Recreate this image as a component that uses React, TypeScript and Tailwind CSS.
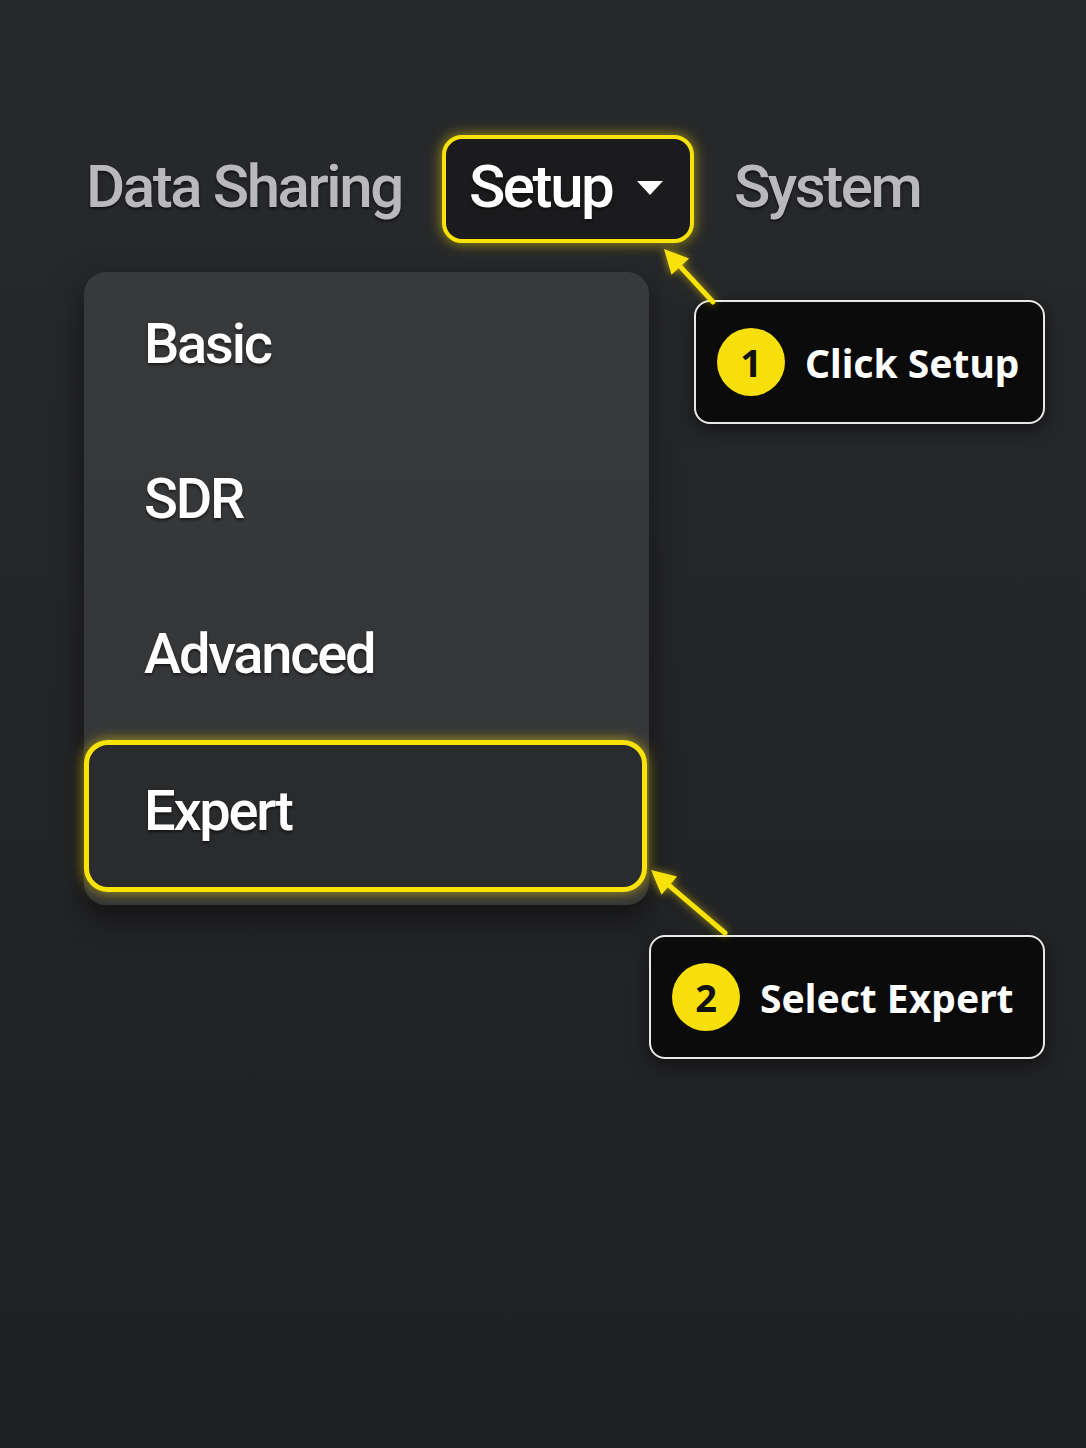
import React from "react";

const shadowText = "[text-shadow:0_2px_3px_rgba(0,0,0,0.55)]";

function Callout({ n, label, className }: { n: string; label: string; className?: string }) {
  return (
    <div
      className={`flex items-center h-[124px] rounded-[16px] border-2 border-[#e8e8e8] bg-[#0b0b0b] shadow-[0_6px_18px_rgba(0,0,0,0.5)] ${className ?? ""}`}
    >
      <div className="flex items-center justify-center w-[68px] h-[68px] rounded-full bg-[#f7df0c] text-[#111] text-[38px] font-bold leading-none [font-family:'Noto_Sans',sans-serif]">
        {n}
      </div>
      <span className="ml-[20px] text-white text-[39px] font-bold leading-none whitespace-nowrap [font-family:'Noto_Sans',sans-serif] [text-shadow:0_2px_3px_rgba(0,0,0,0.6)]">
        {label}
      </span>
    </div>
  );
}

export default function App() {
  const items = ["Basic", "SDR", "Advanced"];
  return (
    <div className="relative w-[1086px] h-[1448px] overflow-hidden bg-[linear-gradient(180deg,#28292b_0%,#242527_50%,#1f2022_100%)] [font-family:Roboto,'Liberation_Sans',sans-serif]">
      <div className="pl-[84px] pt-[135px]">
        {/* top navigation */}
        <div className="flex items-center h-[108px] tracking-[-0.04em] text-[60px] font-medium leading-none">
          <span className={`ml-[2px] -mt-[4px] text-[#b9b9bb] ${shadowText}`}>Data Sharing</span>
          <div className="ml-[40px] flex items-center h-[108px] w-[252px] rounded-[20px] border-[4px] border-[#f8e20a] bg-[#1b1b1d] pl-[23px] shadow-[0_0_14px_rgba(255,226,0,0.6)]">
            <span className={`-mt-[4px] text-white ${shadowText}`}>Setup</span>
            <svg width="28" height="16" viewBox="0 0 28 16" className="ml-[24px] -mt-[2px]">
              <path d="M1 1 L27 1 L14 15 Z" fill="#ffffff" />
            </svg>
          </div>
          <span className={`ml-[40px] -mt-[4px] text-[#b9b9bb] ${shadowText}`}>System</span>
        </div>

        <div className="flex items-start">
          {/* dropdown menu */}
          <div className="mt-[29px] w-[565px] rounded-[22px] bg-[linear-gradient(180deg,#38393b_0%,#343537_100%)] pb-[13px] shadow-[0_12px_30px_rgba(0,0,0,0.5)]">
            {items.map((t) => (
              <div key={t} className="flex items-center h-[155px] pl-[60px]">
                <span className={`-mt-[12px] text-white text-[56px] font-medium leading-none tracking-[-0.04em] ${shadowText}`}>{t}</span>
              </div>
            ))}
            <div className="mt-[3px] flex items-center h-[152px] w-[563px] rounded-[24px] border-[5px] border-[#f8e20a] bg-[#2a2b2d] pl-[55px] shadow-[0_0_14px_rgba(255,226,0,0.6)]">
              <span className={`-mt-[10px] text-white text-[56px] font-medium leading-none tracking-[-0.04em] ${shadowText}`}>Expert</span>
            </div>
          </div>

          {/* step callouts */}
          <div className="flex-1 flex flex-col items-end pr-[41px]">
            <Callout n="1" label="Click Setup" className="mt-[57px] w-[351px] pl-[21px]" />
            <Callout n="2" label="Select Expert" className="mt-[511px] w-[396px] pl-[21px]" />
          </div>
        </div>
      </div>

      {/* pointer arrows */}
      <svg
        className="absolute inset-0 pointer-events-none [filter:drop-shadow(0_0_4px_rgba(255,226,0,0.6))]"
        width="1086"
        height="1448"
        viewBox="0 0 1086 1448"
      >
        <line x1="713" y1="302" x2="680.3" y2="266.6" stroke="#f8e20a" strokeWidth="5" strokeLinecap="round" />
        <polygon points="664,249 689.1,258.5 671.5,274.8" fill="#f8e20a" />
        <line x1="725" y1="933" x2="669.3" y2="885.6" stroke="#f8e20a" strokeWidth="5" strokeLinecap="round" />
        <polygon points="651,870 677.1,876.5 661.5,894.7" fill="#f8e20a" />
      </svg>
    </div>
  );
}
